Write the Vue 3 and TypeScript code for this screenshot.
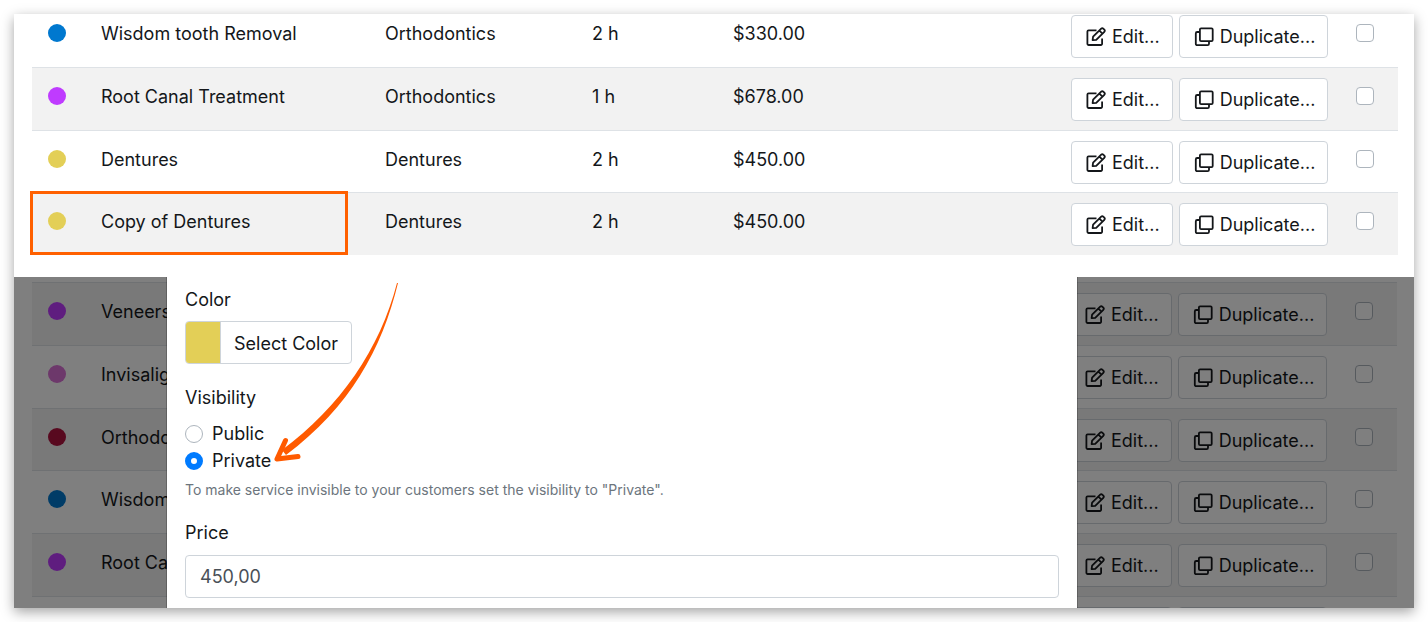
<script setup lang="ts">
import { ref } from 'vue'

interface Service {
  color: string
  name: string
  category: string
  duration: string
  price: string
  highlighted?: boolean
}

const services: Service[] = [
  { color: '#0078cf', name: 'Wisdom tooth Removal', category: 'Orthodontics', duration: '2 h', price: '$330.00' },
  { color: '#bf3bff', name: 'Root Canal Treatment', category: 'Orthodontics', duration: '1 h', price: '$678.00' },
  { color: '#e3cf57', name: 'Dentures', category: 'Dentures', duration: '2 h', price: '$450.00' },
  { color: '#e3cf57', name: 'Copy of Dentures', category: 'Dentures', duration: '2 h', price: '$450.00', highlighted: true },
]

const background: Service[] = [
  { color: '#bf3bff', name: 'Veneers', category: '', duration: '', price: '' },
  { color: '#da70d6', name: 'Invisalign', category: '', duration: '', price: '' },
  { color: '#b0123f', name: 'Orthodontics', category: '', duration: '', price: '' },
  { color: '#0078cf', name: 'Wisdom tooth Removal', category: '', duration: '', price: '' },
  { color: '#bf3bff', name: 'Root Canal Treatment', category: '', duration: '', price: '' },
  { color: '#e3cf57', name: 'Dentures', category: '', duration: '', price: '' },
]

const lists = [
  { id: 'front', rows: services },
  { id: 'back', rows: background },
]

const visibility = ref('private')
const price = ref('450,00')
</script>

<template>
  <main class="panel">
    <section v-for="list in lists" :key="list.id" :class="['section', list.id]">
      <div class="list">
        <table class="services">
          <colgroup>
            <col class="col-dot" />
            <col class="col-name" />
            <col class="col-category" />
            <col class="col-duration" />
            <col class="col-price" />
            <col class="col-actions" />
            <col class="col-check" />
          </colgroup>
          <tbody>
            <tr v-for="row in list.rows" :key="row.name">
              <td class="dot-cell">
                <span class="dot" :style="{ background: row.color }"></span>
                <span v-if="row.highlighted" class="highlight"></span>
              </td>
              <td class="name-cell">{{ row.name }}</td>
              <td>{{ row.category }}</td>
              <td>{{ row.duration }}</td>
              <td>{{ row.price }}</td>
              <td class="actions-cell">
                <div class="actions">
                  <button type="button" class="btn">
                    <svg class="icon" viewBox="0 0 20 20" aria-hidden="true">
                      <path d="M10.5 3.3H2.6a1.2 1.2 0 0 0-1.2 1.2v12.3A1.2 1.2 0 0 0 2.6 18h12.3a1.2 1.2 0 0 0 1.2-1.2v-5.2" />
                      <path d="M6.6 13.2l.5-3.5 8.1-8a1.5 1.5 0 0 1 2.1 0l1 1a1.5 1.5 0 0 1 0 2.1l-8.1 8zM13.4 3.6l3 3" />
                    </svg>
                    Edit...
                  </button>
                  <button type="button" class="btn">
                    <svg class="icon" viewBox="0 0 20 20" aria-hidden="true">
                      <rect x="5.9" y="1.3" width="12.8" height="12.8" rx="1.2" />
                      <path d="M5.8 5H3.2A1.4 1.4 0 0 0 1.8 6.4v10.4a1.4 1.4 0 0 0 1.4 1.4h10.4a1.4 1.4 0 0 0 1.4-1.4v-2.6" />
                    </svg>
                    Duplicate...
                  </button>
                </div>
              </td>
              <td class="check-cell">
                <input type="checkbox" class="check" :aria-label="row.name" />
              </td>
            </tr>
          </tbody>
        </table>
      </div>

      <form v-if="list.id === 'back'" class="modal" @submit.prevent>
        <span id="color-label" class="label">Color</span>
        <button type="button" class="color-button" aria-describedby="color-label">
          <span class="swatch"></span>
          <span class="color-text">Select Color</span>
        </button>

        <fieldset class="visibility">
          <legend class="label">Visibility</legend>
          <label class="option">
            <input v-model="visibility" type="radio" name="visibility" value="public" class="radio" />
            Public
          </label>
          <label class="option">
            <input v-model="visibility" type="radio" name="visibility" value="private" class="radio" />
            Private
          </label>
        </fieldset>
        <p class="help">To make service invisible to your customers set the visibility to "Private".</p>

        <label class="label" for="price">Price</label>
        <input id="price" v-model="price" type="text" class="text-input" />

        <svg class="arrow" viewBox="0 0 130 190" aria-hidden="true">
          <path d="M127 6 C110 72 70 130 12 173 L16 178 C80 130 112 72 128 6 Z" />
          <path class="arrow-head" d="M15.5 163.5 L7 182 L28 179.500" />
        </svg>
      </form>
    </section>
  </main>
</template>

<style>
body {
  margin: 0;
  background: #fff;
}
</style>

<style scoped>
.panel {
  margin: 14px;
  background: #fff;
  box-shadow: 0 4px 12px rgba(0, 0, 0, 0.36);
  color: #14171a;
  font-family: Inter, "Liberation Sans", sans-serif;
  font-size: 18px;
  line-height: 27px;
}

.section {
  position: relative;
  overflow: hidden;
}

.list {
  padding: 0 16px 0 18px;
}

.front .list {
  padding-bottom: 22px;
}

.front .services {
  margin-top: -10px;
}

.back .list {
  position: absolute;
  inset: 0;
  padding: 5px 17px 0 18px;
}

.back .list::after {
  content: "";
  position: absolute;
  inset: 0;
  background: rgba(0, 0, 0, 0.5);
}

.services {
  width: 100%;
  table-layout: fixed;
  border-collapse: separate;
  border-spacing: 0;
}

.col-dot {
  width: 60px;
}

.col-name {
  width: 284px;
}

.back .col-name {
  width: 75px;
}

.col-category {
  width: 207px;
}

.col-duration {
  width: 141px;
}

.col-actions {
  width: 284px;
}

.col-check {
  width: 51px;
}

.services td {
  height: 38px;
  padding: 15px 9px 9px;
  border-top: 1px solid #dee2e6;
  vertical-align: top;
  white-space: nowrap;
}

.services tr:nth-child(3n) td {
  height: 37px;
}

.front tr:nth-child(even) td,
.back tr:nth-child(odd) td {
  background: #f2f2f2;
}

.back .name-cell {
  overflow: hidden;
}

.services .dot-cell {
  position: relative;
  padding-left: 16px;
}

.dot {
  display: block;
  width: 18px;
  height: 18px;
  margin-top: 4px;
  border-radius: 50%;
}

.highlight {
  position: absolute;
  z-index: 1;
  top: -2px;
  left: -2px;
  box-sizing: border-box;
  width: 318px;
  height: 64px;
  border: 3px solid #ff6000;
}

.services .actions-cell {
  height: 43px;
  padding: 10px 8px 9px;
}

.services tr:nth-child(3n) .actions-cell {
  height: 43px;
  padding-bottom: 8px;
}

.actions {
  display: flex;
  gap: 6px;
}

.btn {
  display: flex;
  align-items: center;
  gap: 6px;
  box-sizing: border-box;
  height: 43px;
  padding: 0 12px 0 14px;
  border: 1px solid #ced4da;
  border-radius: 4px;
  background: #fff;
  color: inherit;
  font: inherit;
}

.icon {
  flex: none;
  width: 20px;
  height: 20px;
  fill: none;
  stroke: currentColor;
  stroke-width: 1.8;
  stroke-linejoin: round;
}

.check,
.radio {
  appearance: none;
  display: block;
  box-sizing: border-box;
  flex: none;
  width: 18px;
  height: 18px;
  margin: 4px 0 0;
  border: 1px solid #adb5bd;
  border-radius: 4px;
  background: #fff;
}

.radio {
  margin: 0;
  border-radius: 50%;
}

.radio:checked {
  border: 6px solid #007bff;
}

.modal {
  position: relative;
  display: flex;
  flex-direction: column;
  align-items: flex-start;
  margin: 0 24.1% 0 153px;
  padding: 9px 18px 10px;
  background: #fff;
  box-shadow: 0 0 0 1px rgba(0, 0, 0, 0.2);
}

.label {
  padding: 0;
}

.color-button {
  display: flex;
  box-sizing: border-box;
  height: 43px;
  margin-top: 8px;
  padding: 0;
  overflow: hidden;
  border: 1px solid #ced4da;
  border-radius: 4px;
  background: #fff;
  color: inherit;
  font: inherit;
}

.swatch {
  align-self: stretch;
  width: 34px;
  border-right: 1px solid #ced4da;
  background: #e3cf57;
}

.color-text {
  padding: 8px 13px 6px;
}

.visibility {
  margin: 20px 0 0;
  padding: 0;
  border: 0;
}

.visibility .label {
  margin-bottom: 9px;
}

.option {
  display: flex;
  align-items: center;
  gap: 9px;
}

.help {
  margin: 4px 0 17px;
  color: #6c757d;
  font-size: 14px;
  line-height: 24px;
}

.text-input {
  box-sizing: border-box;
  width: 100%;
  height: 43px;
  margin-top: 9px;
  padding: 0 14px;
  border: 1px solid #ced4da;
  border-radius: 4px;
  background: #fff;
  color: #495057;
  font: inherit;
}

.arrow {
  position: absolute;
  top: 0;
  left: 103px;
  width: 130px;
  height: 190px;
  fill: #ff5a00;
}

.arrow .arrow-head {
  fill: none;
  stroke: #ff5a00;
  stroke-width: 5;
  stroke-linecap: round;
  stroke-linejoin: round;
}
</style>
